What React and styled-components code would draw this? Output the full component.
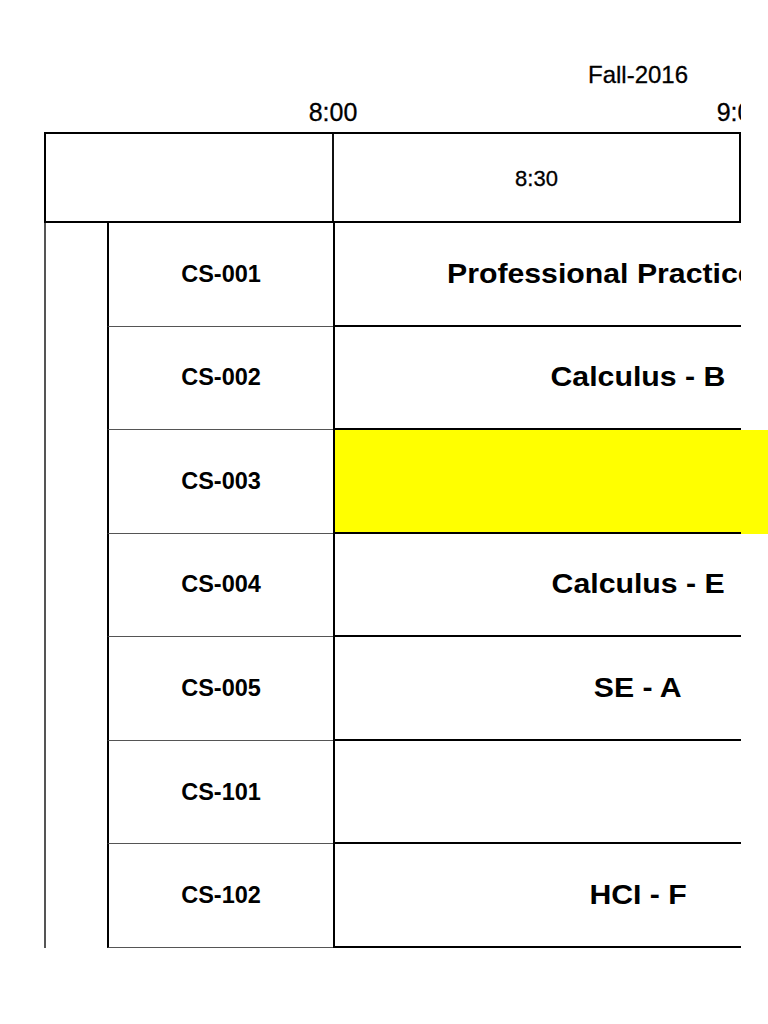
import React from "react";
import styled, { createGlobalStyle } from "styled-components";

const rooms = [
  { id: "CS-001", course: "Professional Practice", start: true },
  { id: "CS-002", course: "Calculus - B" },
  { id: "CS-003", course: "", highlight: "#ffff00" },
  { id: "CS-004", course: "Calculus - E" },
  { id: "CS-005", course: "SE - A" },
  { id: "CS-101", course: "" },
  { id: "CS-102", course: "HCI - F" },
];

const GlobalStyle = createGlobalStyle`
  html, body {
    margin: 0;
    padding: 0;
    background: #fff;
    overflow: hidden;
  }
  body {
    font-family: "Liberation Sans", Arial, sans-serif;
    color: #000;
  }
`;

function App() {
  return (
    <>
      <GlobalStyle />
      <Sheet>
        <TermRow>
          <Term>Fall-2016</Term>
        </TermRow>

        <TimeScale>
          <TimeMark $col={2}>8:00</TimeMark>
          <TimeMark $col={4}>9:00</TimeMark>
        </TimeScale>

        <HeaderBox>
          <Corner />
          <HalfHour>8:30</HalfHour>
        </HeaderBox>

        <Body>
          <Spacer />
          <Rows>
            {rooms.map((room) => (
              <Row key={room.id}>
                <RoomCell>
                  <RoomLabel>{room.id}</RoomLabel>
                </RoomCell>
                <Slot $fill={room.highlight}>
                  <SlotBody $start={room.start}>
                    {room.course && (
                      <Course $start={room.start}>{room.course}</Course>
                    )}
                  </SlotBody>
                </Slot>
              </Row>
            ))}
          </Rows>
        </Body>
      </Sheet>
    </>
  );
}

const Sheet = styled.div`
  width: 768px;
  height: 1024px;
  padding-top: 61px;
  box-sizing: border-box;
`;

const TermRow = styled.div`
  display: flex;
  justify-content: center;
  padding-left: 508px;
  height: 28px;
`;

const Term = styled.span`
  font-size: 24px;
  line-height: 28px;
  white-space: nowrap;
  -webkit-text-stroke: 0.3px #000;
`;

const TimeScale = styled.div`
  display: grid;
  grid-template-columns: 283px 100px 308px 100px;
  width: 741px;
  margin-top: 8px;
  height: 30px;
  overflow: hidden;
`;

const TimeMark = styled.span`
  grid-column: ${(props) => props.$col};
  text-align: center;
  font-size: 25px;
  line-height: 30px;
  -webkit-text-stroke: 0.3px #000;
`;

const HeaderBox = styled.div`
  display: grid;
  grid-template-columns: 288px 1fr;
  width: 697px;
  height: 91px;
  margin-top: 5px;
  margin-left: 44px;
  box-sizing: border-box;
  border: 2px solid #000;
`;

const Corner = styled.div`
  border-right: 2px solid #111;
`;

const HalfHour = styled.div`
  display: flex;
  align-items: center;
  justify-content: center;
  font-size: 22px;
  padding-top: 2px;
  -webkit-text-stroke: 0.3px #000;
`;

const Body = styled.div`
  display: flex;
  margin-left: 44px;
  height: 725px;
  border-left: 2px solid #555;
`;

const Spacer = styled.div`
  flex: 0 0 61px;
`;

const Rows = styled.div`
  flex: 1;
  display: grid;
  grid-template-rows: repeat(7, 1fr);
`;

const Row = styled.div`
  display: grid;
  grid-template-columns: 226px 1fr;
`;

const RoomCell = styled.div`
  display: flex;
  align-items: center;
  justify-content: center;
  border-left: 2px solid #000;
  border-bottom: 1px solid #555;
`;

const RoomLabel = styled.span`
  font-size: 23.5px;
  font-weight: bold;
  white-space: nowrap;
`;

const Slot = styled.div`
  display: flex;
  background: ${(props) => props.$fill || "transparent"};
`;

const SlotBody = styled.div`
  flex: 0 0 408px;
  display: flex;
  align-items: center;
  justify-content: ${(props) => (props.$start ? "flex-start" : "center")};
  padding-left: ${(props) => (props.$start ? "112px" : "200px")};
  box-sizing: border-box;
  border-left: 2px solid #000;
  border-bottom: 2px solid #000;
  overflow: hidden;
`;

const Course = styled.span`
  display: inline-block;
  font-size: 28px;
  font-weight: bold;
  white-space: nowrap;
  transform: scaleX(1.08);
  transform-origin: ${(props) => (props.$start ? "left" : "center")};
`;

export default App;
